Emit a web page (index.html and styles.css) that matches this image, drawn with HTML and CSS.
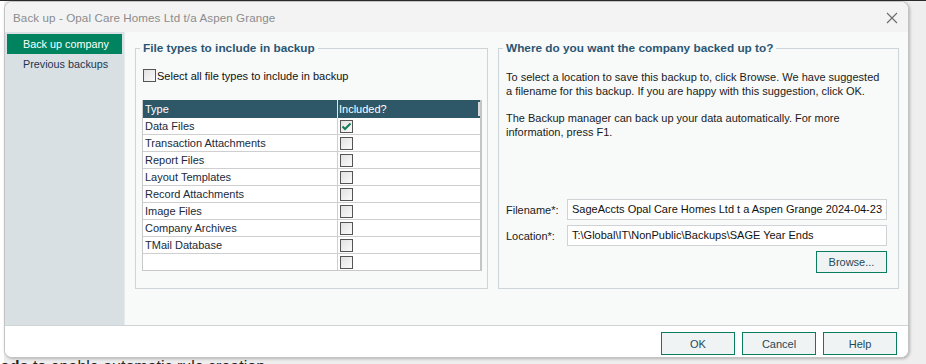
FILE: index.html
```html
<!DOCTYPE html>
<html>
<head>
<meta charset="utf-8">
<title>Back up</title>
<link rel="stylesheet" href="styles.css">
</head>
<body>
<div class="dialog">
  <div class="titlebar">
    <span class="title">Back up - Opal Care Homes Ltd t/a Aspen Grange</span>
    <svg class="close" width="12" height="12" viewBox="0 0 12 12"><path d="M1 1L11 11M11 1L1 11" stroke="#6a6a6a" stroke-width="1.1" fill="none"/></svg>
  </div>
  <div class="main">
    <nav class="nav">
      <div class="nav-item active">Back up company</div>
      <div class="nav-item">Previous backups</div>
    </nav>
    <div class="content">
      <fieldset class="group group-left">
        <legend>File types to include in backup</legend>
        <div class="group-inner">
          <label class="select-all"><span class="cb"></span>Select all file types to include in backup</label>
          <div class="table">
            <div class="row head"><div class="c1">Type</div><div class="c2">Included?</div><div class="c3"></div></div>
            <div class="row"><div class="c1">Data Files</div><div class="c2"><span class="cb checked"><svg width="11" height="9" viewBox="0 0 11 9"><path d="M1.5 4.5L4 7L9.5 1.5" stroke="#137a5c" stroke-width="2" fill="none"/></svg></span></div></div>
            <div class="row"><div class="c1">Transaction Attachments</div><div class="c2"><span class="cb"></span></div></div>
            <div class="row"><div class="c1">Report Files</div><div class="c2"><span class="cb"></span></div></div>
            <div class="row"><div class="c1">Layout Templates</div><div class="c2"><span class="cb"></span></div></div>
            <div class="row"><div class="c1">Record Attachments</div><div class="c2"><span class="cb"></span></div></div>
            <div class="row"><div class="c1">Image Files</div><div class="c2"><span class="cb"></span></div></div>
            <div class="row"><div class="c1">Company Archives</div><div class="c2"><span class="cb"></span></div></div>
            <div class="row"><div class="c1">TMail Database</div><div class="c2"><span class="cb"></span></div></div>
            <div class="row last"><div class="c1"></div><div class="c2"><span class="cb"></span></div></div>
          </div>
        </div>
      </fieldset>
      <fieldset class="group group-right">
        <legend>Where do you want the company backed up to?</legend>
        <div class="group-inner right-inner">
          <p>To select a location to save this backup to, click Browse. We have suggested a filename for this backup. If you are happy with this suggestion, click OK.</p>
          <p>The Backup manager can back up your data automatically. For more information, press F1.</p>
          <div class="fields">
            <div class="field"><span class="flabel">Filename*:</span><div class="input">SageAccts Opal Care Homes Ltd t a Aspen Grange 2024-04-23 10</div></div>
            <div class="field"><span class="flabel">Location*:</span><div class="input">T:\Global\IT\NonPublic\Backups\SAGE Year Ends</div></div>
            <div class="browse-row"><button class="btn browse">Browse...</button></div>
          </div>
        </div>
      </fieldset>
    </div>
  </div>
  <div class="footer">
    <button class="btn fbtn">OK</button>
    <button class="btn fbtn">Cancel</button>
    <button class="btn fbtn">Help</button>
  </div>
</div>
<div class="behind"><b>ods</b> to enable automatic rule creation</div>
</body>
</html>
```

FILE: styles.css
```css
html, body {
  margin: 0;
  padding: 0;
}
body {
  width: 926px;
  height: 364px;
  overflow: hidden;
  background: linear-gradient(to right, #ffffff 0, #ffffff 4px, #eeeeee 4px);
  border-top: 1px solid #2a2a2a;
  box-sizing: border-box;
  font-family: "Liberation Sans", Arial, sans-serif;
}
.dialog {
  margin-left: 4px;
  width: 905px;
  height: 357px;
  box-sizing: border-box;
  border: 1px solid #c4c4c4;
  border-radius: 8px;
  overflow: hidden;
  display: flex;
  flex-direction: column;
  background: #ffffff;
  box-shadow: 1px 1px 3px rgba(0,0,0,0.25);
}
.titlebar {
  height: 30px;
  flex: none;
  background: #f3f3f3;
  display: flex;
  align-items: center;
  justify-content: space-between;
  padding: 0 8px 0 8px;
}
.title {
  font-size: 11.6px;
  color: #8c8c8c;
  letter-spacing: 0.1px;
}
.close {
  margin-right: 2px;
  margin-top: 1px;
}
.main {
  flex: 1;
  display: flex;
  border-bottom: 1px solid #d0d4d6;
}
.nav {
  width: 119px;
  flex: none;
  background: #d9e0e3;
  border-right: 1px solid #e6eaec;
  padding-top: 2px;
}
.nav-item {
  height: 20px;
  line-height: 20px;
  margin: 0 2px 0 2px;
  padding-left: 16px;
  font-size: 10.8px;
  color: #1c3550;
}
.nav-item.active {
  background: #00845f;
  color: #ffffff;
}
.content {
  flex: 1;
  background: #f8fafa;
  display: flex;
  gap: 10px;
  padding: 8px 12px 0 10px;
  align-items: flex-start;
}
.group {
  margin: 0;
  padding: 0;
  border: 1px solid #cdd5d9;
  min-width: 0;
  height: 249px;
  box-sizing: border-box;
}
.group-left { width: 353px; }
.group-right { width: 401px; }
.group legend {
  margin-left: 4px;
  padding: 0 3px;
  font-size: 11.8px;
  font-weight: bold;
  color: #2b5673;
  line-height: 16px;
}
.group-inner {
  padding: 12px 7px 0 6px;
}
.select-all {
  display: flex;
  align-items: center;
  font-size: 11px;
  color: #111;
  height: 15px;
  margin-left: 1px;
}
.cb {
  display: inline-flex;
  align-items: center;
  justify-content: center;
  width: 13px;
  height: 13px;
  box-sizing: border-box;
  border: 1px solid #555;
  background: linear-gradient(135deg, #e2e2e2, #fafafa);
  flex: none;
}
.select-all .cb { margin-right: 1px; }
.table {
  margin-top: 17px;
  width: 337px;
  border: 1px solid #c8c8c8;
  border-right: 2px solid #c4c4c4;
  border-top: none;
  background: #ffffff;
}
.row {
  display: flex;
  height: 16px;
  border-bottom: 1px solid #cfcfcf;
  font-size: 11px;
  color: #1a2a3a;
}
.row.last { border-bottom: none; }
.row .c1 {
  width: 192px;
  padding-left: 2px;
  border-right: 1px solid #cfcfcf;
  line-height: 17px;
  white-space: nowrap;
}
.row .c2 {
  flex: 1;
  padding-left: 2px;
  display: flex;
  align-items: center;
}
.row.head {
  background: #2e5868;
  color: #ffffff;
  height: 18px;
  border-bottom: none;
}
.row.head .c1 {
  border-right: 1px solid #e0e6e8;
  line-height: 18px;
}
.row.head .c2 {
  line-height: 18px;
  padding-left: 1px;
}
.row.head .c3 {
  width: 2px;
  margin: 2px 0;
  background: #d8dcdd;
}
.cb.checked svg { display: block; }
.right-inner {
  padding: 14px 8px 0 7px;
  font-size: 11px;
  color: #1a1a1a;
}
.right-inner p {
  margin: 0 0 13px 0;
  line-height: 14px;
  width: 382px;
}
.fields {
  margin-top: 60px;
}
.field {
  display: flex;
  align-items: center;
  height: 21px;
  margin-bottom: 5px;
}
.flabel {
  width: 61px;
  flex: none;
  font-size: 11px;
}
.input {
  width: 320px;
  height: 21px;
  box-sizing: border-box;
  border: 1px solid #cfd3d5;
  background: #ffffff;
  font-size: 11px;
  line-height: 19px;
  padding-left: 4px;
  overflow: hidden;
  white-space: nowrap;
  color: #111;
}
.browse-row {
  display: flex;
  justify-content: flex-end;
  width: 381px;
}
.btn {
  font-family: "Liberation Sans", Arial, sans-serif;
  font-size: 11px;
  color: #1f4a5a;
  background: #eff3f4;
  border: 1px solid #0b7d5f;
  padding: 0;
  margin: 0;
}
.browse {
  width: 71px;
  height: 22px;
}
.footer {
  height: 31px;
  flex: none;
  background: #ffffff;
  display: flex;
  justify-content: flex-end;
  gap: 7px;
  padding: 6px 11px 0 0;
  box-sizing: border-box;
}
.fbtn {
  width: 74px;
  height: 23px;
}
.behind {
  margin-top: 1px;
  font-family: "Liberation Sans", Arial, sans-serif;
  font-size: 16px;
  line-height: 16px;
  color: #222;
  white-space: nowrap;
}
```
